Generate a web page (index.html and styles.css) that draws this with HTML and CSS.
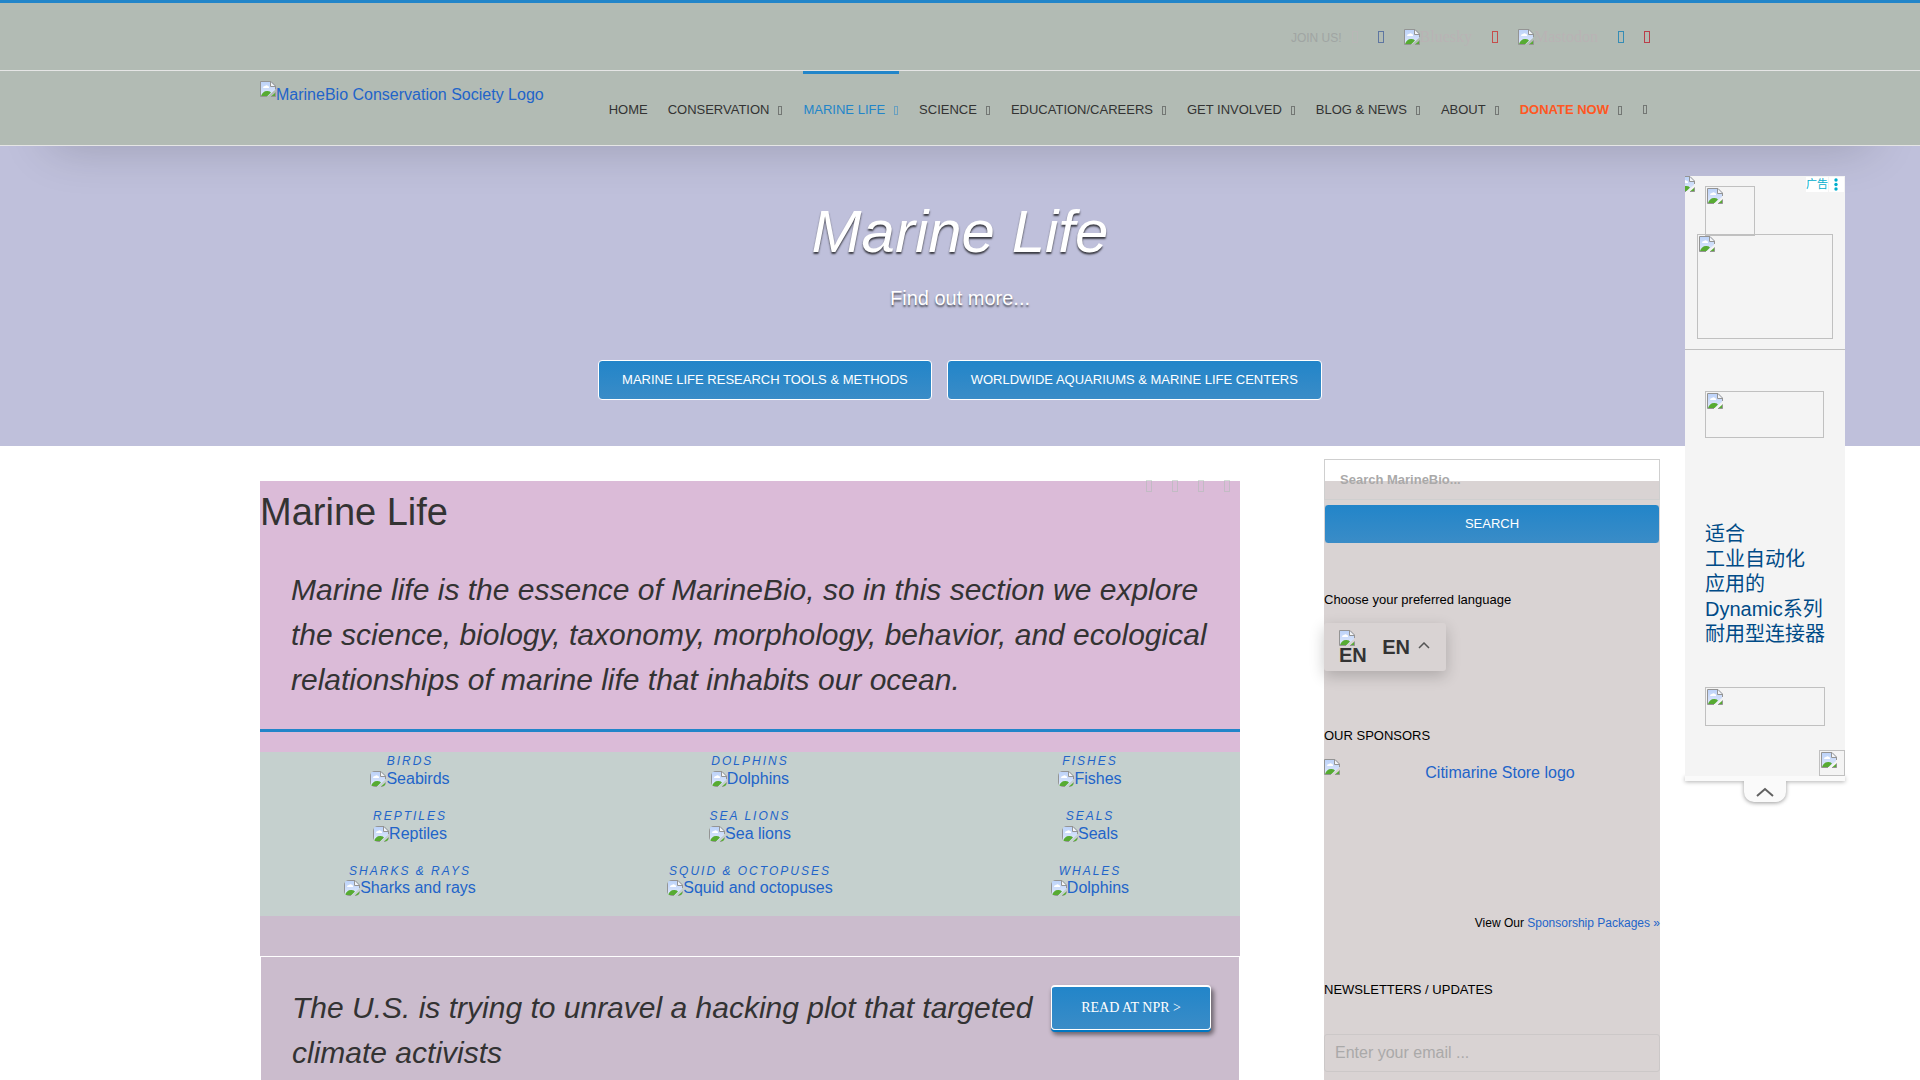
FILE: index.html
```
<!DOCTYPE html>
<html lang="en">
<head>
<meta charset="utf-8">
<title>Marine Life - MarineBio Conservation Society</title>
<meta name="viewport" content="width=device-width, initial-scale=1">
<link rel="stylesheet" href="styles.css">
</head>
<body>
<svg class="defs" aria-hidden="true">
  <defs>
    <linearGradient id="sky" x1="0" y1="0" x2="0" y2="1"><stop offset="0" stop-color="#bdd3f9"/><stop offset="1" stop-color="#dfe8fb"/></linearGradient>
    <symbol id="broken" viewBox="0 0 16 16">
      <path d="M1 1h10l4 4v4L8 15H1z" fill="url(#sky)"/>
      <path d="M3 7a2 2 0 0 1 2-2 2 2 0 0 1 3 0 1.500 1.500 0 0 1 1 2z" fill="#fff"/>
      <path d="M1 15c1-3 3-5 6-5s3 1 4 1.500L7.500 15z" fill="#57ab32"/>
      <path d="M10.500 1v4.500H15z" fill="#f6f6f6"/>
      <path d="M.5 15.500V.500H11L15.500 5v3M10.500 .500v5h5M.5 15.500H7" fill="none" stroke="#949494"/>
      <path d="M15.500 11.500v4H11" fill="#57ab32" stroke="#949494"/>
    </symbol>
  </defs>
</svg>
<header class="header">
  <div class="topbar">
    <div class="container social">
      <span class="join">JOIN US!</span>
      <a class="tofu big faint" href="#" aria-label="Twitter"></a>
      <a class="tofu big facebook" href="#" aria-label="Facebook"></a>
      <a class="missing pale" href="#"><svg><use href="#broken"/></svg>Bluesky</a>
      <a class="tofu big youtube" href="#" aria-label="YouTube"></a>
      <a class="missing pale" href="#"><svg><use href="#broken"/></svg>Mastodon</a>
      <a class="tofu big linkedin" href="#" aria-label="LinkedIn"></a>
      <a class="tofu big pinterest" href="#" aria-label="Pinterest"></a>
    </div>
  </div>
  <div class="container mainbar">
    <a class="missing logo" href="#"><svg><use href="#broken"/></svg>MarineBio Conservation Society Logo</a>
    <nav class="nav">
      <a href="#">HOME</a>
      <a href="#">CONSERVATION<i class="tofu"></i></a>
      <a href="#" class="active">MARINE LIFE<i class="tofu"></i></a>
      <a href="#">SCIENCE<i class="tofu"></i></a>
      <a href="#">EDUCATION/CAREERS<i class="tofu"></i></a>
      <a href="#">GET INVOLVED<i class="tofu"></i></a>
      <a href="#">BLOG &amp; NEWS<i class="tofu"></i></a>
      <a href="#">ABOUT<i class="tofu"></i></a>
      <a href="#"><strong>DONATE NOW</strong><i class="tofu"></i></a>
      <a href="#" class="find" aria-label="Search"><i class="tofu"></i></a>
    </nav>
  </div>
</header>
<section class="hero">
  <h1>Marine Life</h1>
  <p>Find out more...</p>
  <div class="hero-actions">
    <a class="button" href="#">MARINE LIFE RESEARCH TOOLS &amp; METHODS</a>
    <a class="button" href="#">WORLDWIDE AQUARIUMS &amp; MARINE LIFE CENTERS</a>
  </div>
</section>
<div class="container page">
  <main class="content">
    <div class="share">
      <a class="tofu big" href="#" aria-label="Share on Facebook"></a>
      <a class="tofu big" href="#" aria-label="Share on Twitter"></a>
      <a class="tofu big" href="#" aria-label="Share on LinkedIn"></a>
      <a class="tofu big" href="#" aria-label="Share by email"></a>
    </div>
    <section class="intro">
      <h2>Marine Life</h2>
      <p>Marine life is the essence of MarineBio, so in this section we explore the science, biology, taxonomy, morphology, behavior, and ecological relationships of marine life that inhabits our ocean.</p>
      <hr>
    </section>
    <section class="groups">
      <a href="#"><em>BIRDS</em><span class="missing"><svg><use href="#broken"/></svg>Seabirds</span></a>
      <a href="#"><em>DOLPHINS</em><span class="missing"><svg><use href="#broken"/></svg>Dolphins</span></a>
      <a href="#"><em>FISHES</em><span class="missing"><svg><use href="#broken"/></svg>Fishes</span></a>
      <a href="#"><em>REPTILES</em><span class="missing"><svg><use href="#broken"/></svg>Reptiles</span></a>
      <a href="#"><em>SEA LIONS</em><span class="missing"><svg><use href="#broken"/></svg>Sea lions</span></a>
      <a href="#"><em>SEALS</em><span class="missing"><svg><use href="#broken"/></svg>Seals</span></a>
      <a href="#"><em>SHARKS &amp; RAYS</em><span class="missing"><svg><use href="#broken"/></svg>Sharks and rays</span></a>
      <a href="#"><em>SQUID &amp; OCTOPUSES</em><span class="missing"><svg><use href="#broken"/></svg>Squid and octopuses</span></a>
      <a href="#"><em>WHALES</em><span class="missing"><svg><use href="#broken"/></svg>Dolphins</span></a>
    </section>
    <section class="news">
      <h2>The U.S. is trying to unravel a hacking plot that targeted climate activists</h2>
      <a class="button raised" href="#">READ AT NPR &gt;</a>
    </section>
  </main>
  <aside class="sidebar">
    <form class="search">
      <input type="search" aria-label="Search MarineBio" placeholder="Search MarineBio...">
      <button type="button" class="button">SEARCH</button>
    </form>
    <section class="language">
      <h3>Choose your preferred language</h3>
      <button type="button" class="picker">
        <span class="flag"><svg><use href="#broken"/></svg>EN</span>
        <span>EN</span>
        <svg class="chevron" viewBox="0 0 12 7"><path d="M1 6l5-5 5 5"/></svg>
      </button>
    </section>
    <section class="sponsors">
      <h3>OUR SPONSORS</h3>
      <a class="sponsor" href="#"><svg><use href="#broken"/></svg><span>Citimarine Store logo</span></a>
      <p>View Our <a href="#">Sponsorship Packages »</a></p>
    </section>
    <section class="newsletter">
      <h3><label for="email">NEWSLETTERS / UPDATES</label></h3>
      <input type="email" id="email" placeholder="Enter your email ...">
    </section>
  </aside>
</div>
<aside class="ad" lang="zh">
  <div class="ad-body">
    <svg class="ad-clip"><use href="#broken"/></svg>
    <div class="ad-tag"><span>广告</span><svg viewBox="0 0 15 15"><circle cx="7" cy="3" r="1.700"/><circle cx="7" cy="7.500" r="1.700"/><circle cx="7" cy="12" r="1.700"/></svg></div>
    <div class="ad-top">
      <span class="frame brand"><svg><use href="#broken"/></svg></span>
      <span class="frame photo"><svg><use href="#broken"/></svg></span>
    </div>
    <div class="ad-main">
      <span class="frame mark"><svg><use href="#broken"/></svg></span>
      <p>适合<br>工业自动化<br>应用的<br>Dynamic系列<br>耐用型连接器</p>
      <span class="frame cta"><svg><use href="#broken"/></svg></span>
    </div>
    <span class="frame corner"><svg><use href="#broken"/></svg></span>
  </div>
  <div class="ad-bar"></div>
  <button type="button" class="ad-toggle" aria-label="Collapse"><svg viewBox="0 0 18 10"><path d="M1 9l8-7 8 7"/></svg></button>
</aside>
</body>
</html>
```
FILE: styles.css
```
* { box-sizing: border-box; }
body {
  margin: 0;
  min-height: 100vh;
  display: flex;
  flex-direction: column;
  position: relative;
  overflow-x: hidden;
  font: 16px/24px "Liberation Sans", "Noto Sans CJK SC", sans-serif;
  color: #333;
  background: #fff;
}
h1, h2, h3, p { margin: 0; font-weight: 400; }
a { color: #2264c9; text-decoration: none; }
svg { display: block; width: 16px; height: 16px; flex: none; }
.defs { position: absolute; width: 0; height: 0; }
.container { width: 100%; max-width: 1400px; margin: 0 auto; }

/* Small empty glyph boxes */
.tofu {
  display: inline-block;
  width: 4px;
  height: 9px;
  border: 1px solid currentColor;
  opacity: .5;
}
.tofu.big { width: 6px; height: 12px; }

/* Header */
.header {
  position: relative;
  background: #b2bbb4;
  border-top: 3px solid #2285c9;
  border-bottom: 1px solid #e5e5e5;
  box-shadow: 0 50px 50px -50px rgba(0, 0, 0, .2);
  z-index: 1;
}
.topbar { border-bottom: 1px solid #e5e5e5; }
.social {
  display: flex;
  align-items: center;
  justify-content: flex-end;
  gap: 20px;
  height: 67px;
  padding-right: 10px;
}
.join { font-size: 12px; line-height: 22px; padding-top: 2px; color: #a0a5a3; margin-right: -10px; }
.missing { display: inline-flex; align-items: center; }
.pale { font-family: "Liberation Serif", serif; color: #b9b3b4; }
.faint { color: #bbb5b6; }
.facebook { color: #3b5998; }
.youtube { color: #cd201f; }
.linkedin { color: #0077b5; }
.pinterest { color: #bd081c; }
.social .tofu { opacity: .7; }
.mainbar { display: flex; justify-content: space-between; height: 74px; padding-right: 13px; }
.missing.logo { align-items: flex-start; padding-top: 10px; line-height: 28px; }
.nav { display: flex; gap: 20px; }
.nav a {
  border-top: 3px solid transparent;
  font-size: 13px;
  line-height: 72px;
  height: 74px;
  color: #333;
  white-space: nowrap;
}
.nav .tofu { margin: 0 1px 0 9px; vertical-align: -1px; }
.nav .find .tofu { margin: 0; vertical-align: 0; }
.nav .active { color: #2285c9; border-color: #2285c9; }
.nav strong { color: #ff5722; }

/* Hero */
.hero {
  height: 300px;
  padding-top: 51px;
  background: #bfc0db;
  color: #fff;
  text-align: center;
}
.hero h1 {
  font-size: 60px;
  line-height: 70px;
  font-style: italic;
  text-shadow: 0 2px 2px rgba(0, 0, 0, .7);
}
.hero p { margin-top: 19px; font-size: 20px; line-height: 24px; text-shadow: 0 2px 2px rgba(0, 0, 0, .6); }
.hero-actions { display: flex; justify-content: center; gap: 15px; margin-top: 50px; }
.button {
  border: 1px solid #fff;
  border-radius: 4px;
  padding: 0 23px;
  font-family: inherit;
  font-size: 13px;
  line-height: 38px;
  color: #fff;
  background: linear-gradient(#2285c9, #3a8cc7);
}

/* Page columns */
.page { flex: 1; display: flex; justify-content: space-between; padding-top: 35px; }
.content { position: relative; width: 70%; display: flex; flex-direction: column; }
.share { position: absolute; top: -1px; right: 10px; display: flex; gap: 20px; }
.share .tofu { color: #a9bbb0; }
.intro { background: #dbbbd8; padding-bottom: 20px; }
.intro h2 { font-size: 38px; line-height: 62px; }
.intro p {
  margin: 24px 31px 0;
  font-size: 30px;
  line-height: 45px;
  font-style: italic;
}
.intro hr { margin: 27px 0 0; border: 0; height: 3px; background: #2285c9; }
.groups {
  display: grid;
  grid-template-columns: repeat(3, 1fr);
  column-gap: 40px;
  padding-bottom: 18px;
  background: #c5d0ce;
  border-bottom: 40px solid #cbbccd;
}
.groups a { display: flex; flex-direction: column; align-items: center; height: 55px; padding-top: 2px; }
.groups em { font-size: 12px; line-height: 14px; letter-spacing: 2px; }
.groups .missing { line-height: 22px; }
.groups svg { border-radius: 5px; }
.groups a:nth-child(n+7) { height: 36px; }
.groups a:nth-child(n+7) .missing { line-height: 20px; }
.news {
  flex: 1;
  display: flex;
  align-items: flex-start;
  justify-content: space-between;
  padding: 28px 28px 0 31px;
  border: 1px solid #fff;
  border-bottom: 0;
  background: #cbbccd;
}
.news h2 { font-size: 30px; line-height: 45px; font-style: italic; max-width: 750px; }
.raised {
  padding: 0 29px;
  font-family: "Liberation Serif", serif;
  font-size: 14px;
  line-height: 42px;
  border-top-width: 2px;
  box-shadow: 0 2px 0 #0077c2, 2px 4px 4px 1px rgba(0, 0, 0, .45);
}

/* Sidebar */
.sidebar { width: 24%; padding-bottom: 8px; background: #d9d3d3; }
.search { display: flex; flex-direction: column; margin-top: -22px; }
input {
  display: block;
  width: 100%;
  border: 1px solid #cfcfcf;
  background: transparent;
  font-family: inherit;
  outline: 0;
}
input::placeholder { color: #aaa9a9; opacity: 1; }
.search input { height: 41px; padding: 0 15px; font-size: 13px; font-weight: 700; }
.search .button { margin: 4px 0 0; border-color: #d9d3d3; }
.sidebar h3 { font-size: 13px; line-height: 20px; color: #000; }
.language { margin-top: 46px; }
.picker {
  display: flex;
  align-items: center;
  width: 122px;
  height: 48px;
  margin-top: 13px;
  padding: 0 16px 0 15px;
  border: 0;
  border-radius: 3px;
  background: #d9d3d3;
  box-shadow: 0 5px 15px rgba(0, 0, 0, .2);
  font: 700 20px/20px "Liberation Sans", sans-serif;
  color: #333;
}
.flag { width: 44px; text-align: left; line-height: 18px; }
.chevron { width: 12px; height: 7px; margin-left: 8px; margin-bottom: 3px; }
.chevron path { fill: none; stroke: #555; stroke-width: 1.5; }
.sponsors { margin-top: 55px; }
.sponsor { display: flex; height: 146px; margin-top: 13px; }
.sponsor span { flex: 1; padding-top: 2px; text-align: center; }
.sponsors p { font-size: 12px; line-height: 20px; margin-top: 8px; text-align: right; color: #000; }
.newsletter { margin-top: 47px; }
.newsletter input { height: 38px; margin-top: 34px; padding: 0 10px; font-size: 16px; border-color: #ccc8c8; border-radius: 3px; }

/* Floating advertisement over the page */
.ad { position: absolute; top: 176px; right: 75px; width: 160px; z-index: 2; }
.ad-body { position: relative; height: 600px; overflow: hidden; background: #f4f4f4; }
.ad-clip { position: absolute; left: -6px; top: 0; }
.ad-tag { position: absolute; top: 1px; right: 1px; display: flex; gap: 1px; font-size: 11px; line-height: 15px; color: #00aecd; }
.ad-tag span, .ad-tag svg { background: #fff; }
.ad-tag svg { width: 15px; height: 15px; fill: #00aecd; }
.frame { display: block; border: 1px solid #c0c0c0; padding: 1px; }
.ad-top { height: 174px; padding: 10px 12px 0; border-bottom: 1px solid #c0c0c0; }
.brand { width: 50px; height: 50px; margin-left: 8px; }
.photo { height: 105px; margin-top: -2px; }
.ad-main { padding: 41px 20px 0; }
.mark { width: 119px; height: 47px; }
.ad-main p { margin: 84px -10px 40px 0; font-size: 20px; line-height: 25px; color: #004b87; }
.cta { height: 39px; }
.corner { width: 26px; height: 26px; margin: 24px 0 0 auto; }
.ad-bar { height: 5px; background: #fafafa; box-shadow: 0 1px 4px rgba(0, 0, 0, .3); }
.ad-toggle {
  display: flex;
  justify-content: center;
  align-items: center;
  width: 42px;
  height: 21px;
  margin: 0 auto;
  padding: 0;
  border: 0;
  border-radius: 0 0 10px 10px;
  background: #fafafa;
  box-shadow: 0 1px 4px rgba(0, 0, 0, .4);
  clip-path: inset(0 -6px -6px);
}
.ad-toggle svg { width: 18px; height: 10px; }
.ad-toggle path { fill: none; stroke: #616161; stroke-width: 2; }
```
